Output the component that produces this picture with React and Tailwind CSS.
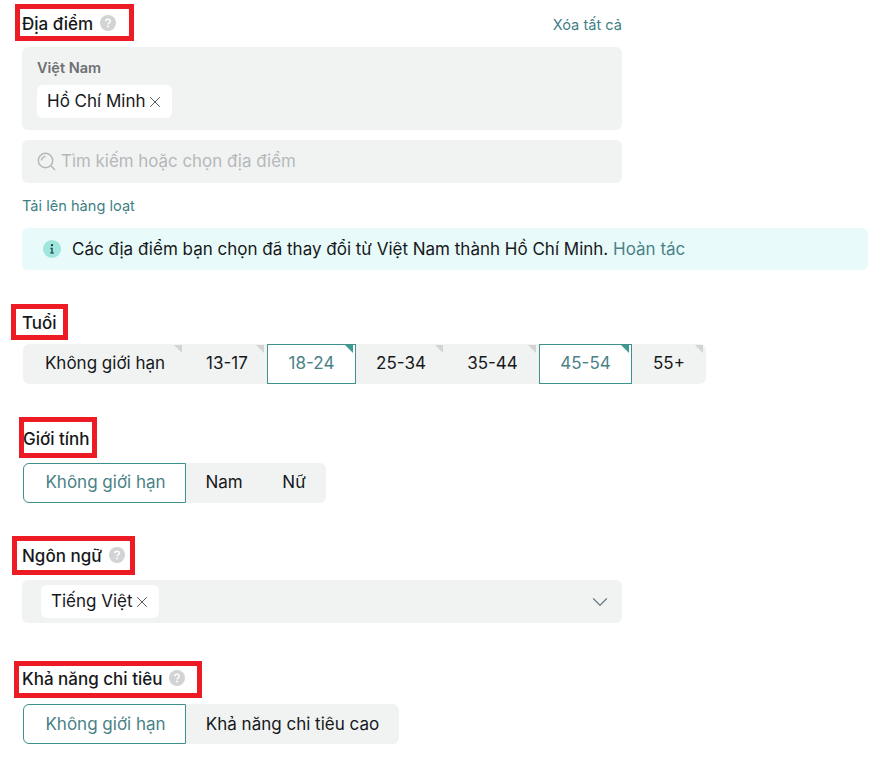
import React from 'react';
import { X, ChevronDown } from 'lucide-react';

const HelpIcon = () => (
  <svg width="16" height="16" viewBox="0 0 16 16" className="shrink-0">
    <circle cx="8" cy="8" r="8" fill="#d1d3d4" />
    <path d="M5.8 6.3c0-1.3 1-2.1 2.2-2.1s2.2.8 2.2 2c0 1.8-2.2 1.8-2.2 3.4" fill="none" stroke="#fff" strokeWidth="1.5" />
    <circle cx="8" cy="11.6" r="1" fill="#fff" />
  </svg>
);

const InfoIcon = () => (
  <svg width="18" height="18" viewBox="0 0 18 18" className="shrink-0">
    <circle cx="9" cy="9" r="9" fill="#9ee6de" />
    <circle cx="9" cy="5.2" r="1.1" fill="#14312f" />
    <path d="M7.4 7.8H9.6V12.4H10.8V13.4H7.2V12.4H8.4V8.8H7.4Z" fill="#14312f" />
  </svg>
);

const SearchIcon = () => (
  <svg width="19" height="19" viewBox="0 0 19 19" fill="none" stroke="#b5b8ba" strokeWidth="1.5" className="shrink-0">
    <circle cx="8.5" cy="8.5" r="7.2" />
    <path d="M13.8 13.8L18 18" />
    <path d="M4.5 8.5a4 4 0 0 1 4-4" />
  </svg>
);

const Label = ({ children, help, boxClass }) => (
  <div className="relative flex h-6 w-fit items-center gap-[7px] text-[17px] font-medium text-[#16181a]">
    <span className="pt-[4px]">{children}</span>
    {help && <HelpIcon />}
    <span className={`absolute border-[5px] border-[#ed1c24] ${boxClass}`} />
  </div>
);

const Chip = ({ children, className }) => (
  <span className={`flex h-[33px] w-fit items-center rounded-md bg-white text-[17px] text-[#16181a] ${className}`}>
    <span className="pt-[1px]">{children}</span>
    <X size={18} strokeWidth={1.2} className="text-[#44474a]" />
  </span>
);

const Segment = ({ label, width, selected, corner }) => (
  <div
    className={`relative flex h-10 items-center justify-center border text-[17px] ${
      selected ? 'border-[#3f918c] bg-white text-[#4a8287]' : 'border-transparent text-[#16181a]'
    } ${width}`}
  >
    {label}
    {corner && (
      <span
        className={`absolute right-[2px] top-0 h-0 w-0 border-l-[8px] border-t-[8px] border-l-transparent ${
          selected ? 'border-t-[#3f9a92]' : 'border-t-[#d1d3d4]'
        }`}
      />
    )}
  </div>
);

const App = () => {
  return (
    <div className="min-h-screen bg-white pl-[22px] pt-[11px] font-['Inter',sans-serif]">
      <div className="flex w-[600px] items-start justify-between">
        <Label help boxClass="left-[-7px] top-[-7px] h-[37px] w-[119px]">Địa điểm</Label>
        <button className="mt-[4px] text-[14.6px] leading-5 text-[#3f7f85]">Xóa tất cả</button>
      </div>

      <div className="mt-3 h-[83px] w-[600px] rounded-md bg-[#f1f3f3] pl-[15px] pt-[11px]">
        <div className="text-[14.5px] font-semibold leading-5 text-[#6e7072]">Việt Nam</div>
        <Chip className="mt-[7px] pl-[10px] pr-[8px]">Hồ Chí Minh</Chip>
      </div>

      <div className="mt-[10px] flex h-[43px] w-[600px] items-center gap-[5px] rounded-md bg-[#f1f3f3] pl-[15px] text-[16.9px] text-[#b5b8ba]">
        <SearchIcon />
        <span>Tìm kiếm hoặc chọn địa điểm</span>
      </div>

      <div className="mt-[13px] text-[14.6px] leading-5 text-[#3f7f85]">Tải lên hàng loạt</div>

      <div className="mt-3 flex h-[42px] w-[846px] items-center rounded-md bg-[#e8faf9] pl-[21px] text-[17px] text-[#16181a]">
        <InfoIcon />
        <span className="ml-[11px] pt-[1px]">
          Các địa điểm bạn chọn đã thay đổi từ Việt Nam thành Hồ Chí Minh.{' '}
          <span className="text-[#4a8287]">Hoàn tác</span>
        </span>
      </div>

      <div className="mt-10">
        <Label boxClass="left-[-11px] top-[-6px] h-9 w-[57px]">Tuổi</Label>
      </div>
      <div className="ml-px mt-[10px] flex w-fit rounded-md bg-[#f1f3f3]">
        <Segment label="Không giới hạn" width="w-[162px] pl-[2px]" corner />
        <Segment label="13-17" width="w-[82px] pl-[2px]" corner />
        <Segment label="18-24" width="w-[89px]" selected corner />
        <Segment label="25-34" width="w-[90px]" corner />
        <Segment label="35-44" width="w-[93px]" corner />
        <Segment label="45-54" width="w-[93px]" selected corner />
        <Segment label="55+" width="w-[74px]" corner />
      </div>

      <div className="ml-px mt-[42px]">
        <Label boxClass="left-[-4px] top-[-9px] h-[41px] w-[78px]">Giới tính</Label>
      </div>
      <div className="ml-px mt-[13px] flex w-fit rounded-md bg-[#f1f3f3]">
        <Segment label="Không giới hạn" width="w-[163px] rounded-l-md pl-[2px]" selected />
        <Segment label="Nam" width="w-[76px]" />
        <Segment label="Nữ" width="w-[64px]" />
      </div>

      <div className="mt-10">
        <Label help boxClass="left-[-10px] top-[-7px] h-[39px] w-[123px]">Ngôn ngữ</Label>
      </div>
      <div className="mt-[13px] flex h-[43px] w-[600px] items-center justify-between rounded-md bg-[#f1f3f3] pl-[19px] pr-[9px]">
        <Chip className="pl-[10px] pr-[8px]">Tiếng Việt</Chip>
        <ChevronDown size={26} strokeWidth={1.1} className="text-[#6c7a85]" />
      </div>

      <div className="mt-[43px]">
        <Label help boxClass="left-[-8px] top-[-5px] h-[37px] w-[188px]">Khả năng chi tiêu</Label>
      </div>
      <div className="ml-px mt-[14px] flex w-fit rounded-md bg-[#f1f3f3]">
        <Segment label="Không giới hạn" width="w-[163px] rounded-l-md pl-[2px] pt-[2px]" selected />
        <Segment label="Khả năng chi tiêu cao" width="w-[213px] pt-[2px]" />
      </div>
    </div>
  );
};

export default App;
